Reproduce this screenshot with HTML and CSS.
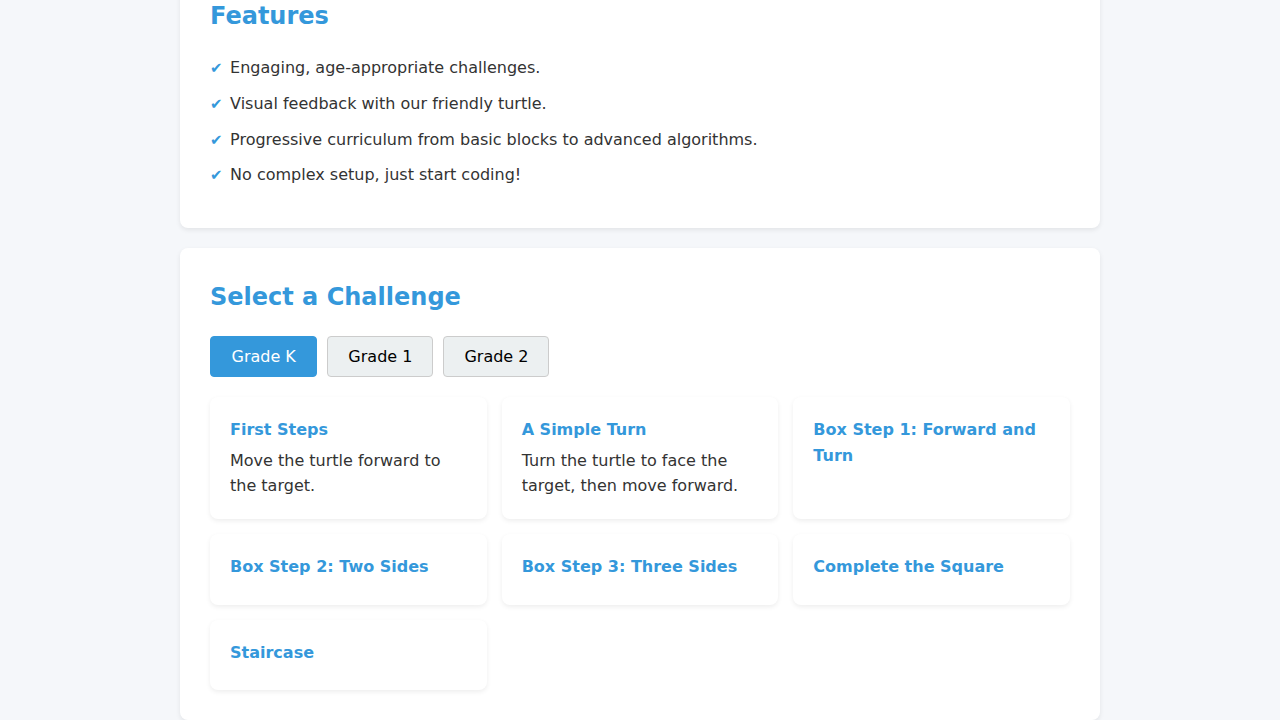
FILE: index.html
```html
<!DOCTYPE html>
<html lang="en">
<head>
<meta charset="utf-8">
<title>Turtle Coding</title>
<link rel="stylesheet" href="styles.css">
</head>
<body>
<main class="container">
  <section class="panel">
    <h2 class="panel-title">Features</h2>
    <ul class="features">
      <li>Engaging, age-appropriate challenges.</li>
      <li>Visual feedback with our friendly turtle.</li>
      <li>Progressive curriculum from basic blocks to advanced algorithms.</li>
      <li>No complex setup, just start coding!</li>
    </ul>
  </section>
  <section class="panel">
    <h2 class="panel-title">Select a Challenge</h2>
    <div class="grade-tabs">
      <button class="grade-btn active">Grade K</button>
      <button class="grade-btn">Grade 1</button>
      <button class="grade-btn">Grade 2</button>
    </div>
    <div class="challenge-grid">
      <div class="challenge">
        <h3 class="challenge-title">First Steps</h3>
        <p class="challenge-desc">Move the turtle forward to the target.</p>
      </div>
      <div class="challenge">
        <h3 class="challenge-title">A Simple Turn</h3>
        <p class="challenge-desc">Turn the turtle to face the target, then move forward.</p>
      </div>
      <div class="challenge">
        <h3 class="challenge-title">Box Step 1: Forward and Turn</h3>
      </div>
      <div class="challenge">
        <h3 class="challenge-title">Box Step 2: Two Sides</h3>
      </div>
      <div class="challenge">
        <h3 class="challenge-title">Box Step 3: Three Sides</h3>
      </div>
      <div class="challenge">
        <h3 class="challenge-title">Complete the Square</h3>
      </div>
      <div class="challenge">
        <h3 class="challenge-title">Staircase</h3>
      </div>
    </div>
  </section>
</main>
</body>
</html>
```

FILE: styles.css
```css
* { box-sizing: border-box; }

html, body {
  margin: 0;
  padding: 0;
}

body {
  background: #f5f7fa;
  font-family: "DejaVu Sans", sans-serif;
  font-size: 16px;
  line-height: 1.6;
  color: #333;
  overflow: hidden;
}

.container {
  width: 920px;
  margin: -33px auto 0;
  display: flex;
  flex-direction: column;
  gap: 20px;
}

.panel {
  background: #fff;
  border-radius: 8px;
  padding: 30px;
  box-shadow: 0 2px 5px rgba(0, 0, 0, 0.08);
}

.panel-title {
  margin: 0 0 20px;
  font-size: 24px;
  font-weight: bold;
  color: #3498db;
}

.features {
  list-style: none;
  margin: 0;
  padding: 0;
}

.features li {
  margin-bottom: 10px;
}

.features li::before {
  content: "✔";
  color: #3498db;
  margin-right: 7.5px;
  font-size: 15px;
}

.grade-tabs {
  display: flex;
  gap: 10px;
  margin-bottom: 20px;
}

.grade-btn {
  font-family: "DejaVu Sans", sans-serif;
  font-size: 16px;
  padding: 10px 20px;
  border: 1px solid #ccc;
  border-radius: 4px;
  background: #ecf0f1;
  color: #000;
}

.grade-btn.active {
  padding: 10px 20.5px;
  background: #3498db;
  border-color: #3498db;
  color: #fff;
}

.challenge-grid {
  display: grid;
  grid-template-columns: repeat(3, 1fr);
  gap: 15px;
}

.challenge {
  background: #fff;
  border-radius: 8px;
  padding: 20px;
  box-shadow: 0 2px 5px rgba(0, 0, 0, 0.07);
}

.challenge-title {
  margin: 0 0 5px;
  font-size: 16px;
  font-weight: bold;
  color: #3498db;
}

.challenge-desc {
  margin: 0;
}
```
